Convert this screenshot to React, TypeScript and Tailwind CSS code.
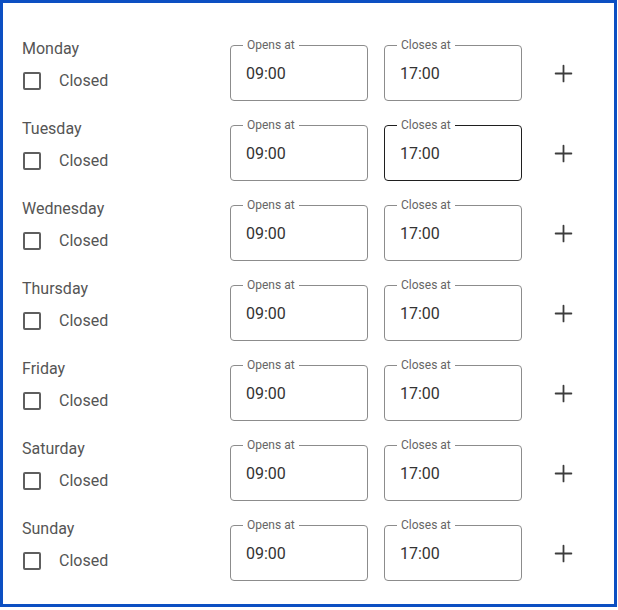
import { Plus } from "lucide-react";

const days = ["Monday", "Tuesday", "Wednesday", "Thursday", "Friday", "Saturday", "Sunday"];

function TimeField({ label, value, active }: { label: string; value: string; active?: boolean }) {
  return (
    <div
      className={`relative w-[138px] h-[56px] rounded-[4px] border flex items-center pl-[15px] pt-[2px] ${
        active ? "border-[#1f1f1f]" : "border-[#8c8c8c]"
      }`}
    >
      <span className="absolute left-[12px] top-[-9px] bg-white px-[4px] text-[12px] leading-[16px] text-[#666]">
        {label}
      </span>
      <span className="text-[16px] text-[#333]">{value}</span>
    </div>
  );
}

export default function App() {
  return (
    <div className="w-[617px] h-[607px] border-[3px] border-[#0c4fc2] bg-white pt-[34px] pl-[19px] font-['Roboto',sans-serif]">
      {days.map((day) => (
        <div key={day} className="flex items-start h-[80px]">
          <div className="w-[208px]">
            <div className="text-[16px] leading-[24px] text-[#555]">{day}</div>
            <label className="flex items-center mt-[11px] ml-[1px]">
              <span className="w-[18px] h-[18px] border-2 border-[#5f5f5f] rounded-[2px]" />
              <span className="ml-[18px] text-[16px] leading-[18px] text-[#555]">Closed</span>
            </label>
          </div>
          <div className="flex gap-[16px] mt-[8px] items-center">
            <TimeField label="Opens at" value="09:00" />
            <TimeField label="Closes at" value="17:00" active={day === "Tuesday"} />
            <button className="ml-[5px] w-[40px] h-[40px] flex items-center justify-center text-[#3c3c3c]">
              <Plus size={27} strokeWidth={1.6} />
            </button>
          </div>
        </div>
      ))}
    </div>
  );
}
